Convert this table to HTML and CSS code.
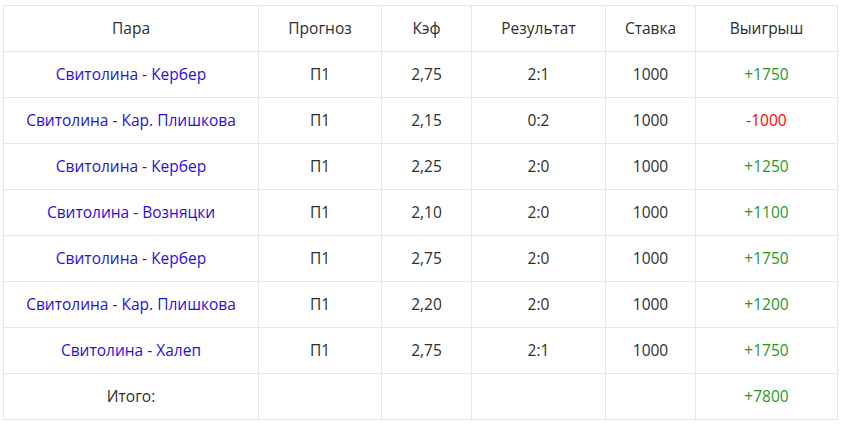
FILE: index.html
```html
<!DOCTYPE html>
<html lang="ru">
<head>
<meta charset="utf-8">
<title>Ставки</title>
<link rel="stylesheet" href="styles.css">
</head>
<body>
<div class="wrap">
<table class="bets">
<colgroup>
<col class="c1"><col class="c2"><col class="c3"><col class="c4"><col class="c5"><col class="c6">
</colgroup>
<thead>
<tr><th>Пара</th><th>Прогноз</th><th>Кэф</th><th>Результат</th><th>Ставка</th><th>Выигрыш</th></tr>
</thead>
<tbody>
<tr><td class="pair">Свитолина - Кербер</td><td>П1</td><td>2,75</td><td>2:1</td><td>1000</td><td class="win">+1750</td></tr>
<tr><td class="pair">Свитолина - Кар. Плишкова</td><td>П1</td><td>2,15</td><td>0:2</td><td>1000</td><td class="loss">-1000</td></tr>
<tr><td class="pair">Свитолина - Кербер</td><td>П1</td><td>2,25</td><td>2:0</td><td>1000</td><td class="win">+1250</td></tr>
<tr><td class="pair">Свитолина - Возняцки</td><td>П1</td><td>2,10</td><td>2:0</td><td>1000</td><td class="win">+1100</td></tr>
<tr><td class="pair">Свитолина - Кербер</td><td>П1</td><td>2,75</td><td>2:0</td><td>1000</td><td class="win">+1750</td></tr>
<tr><td class="pair">Свитолина - Кар. Плишкова</td><td>П1</td><td>2,20</td><td>2:0</td><td>1000</td><td class="win">+1200</td></tr>
<tr><td class="pair">Свитолина - Халеп</td><td>П1</td><td>2,75</td><td>2:1</td><td>1000</td><td class="win">+1750</td></tr>
<tr><td>Итого:</td><td></td><td></td><td></td><td></td><td class="win">+7800</td></tr>
</tbody>
</table>
</div>
</body>
</html>
```
FILE: styles.css
```css
html, body {
  margin: 0;
  padding: 0;
  background: #ffffff;
}
.wrap {
  padding: 5px 4px 0 3px;
}
.bets {
  width: 834px;
  border-collapse: collapse;
  table-layout: fixed;
  font-family: "Open Sans", "Liberation Sans", sans-serif;
  font-size: 15.5px;
  line-height: 20px;
  color: #2e2e2e;
}
.c1 { width: 255px; }
.c2 { width: 123px; }
.c3 { width: 90px; }
.c4 { width: 134px; }
.c5 { width: 90px; }
.c6 { width: 142px; }
.bets th, .bets td {
  border: 1px solid #e6e6e6;
  height: 43px;
  padding: 0 0 2px;
  text-align: center;
  vertical-align: middle;
  font-weight: normal;
}
.bets .pair { color: #2a10dc; }
.bets .win { color: #1f9a1f; }
.bets .loss { color: #ff0000; }
```
